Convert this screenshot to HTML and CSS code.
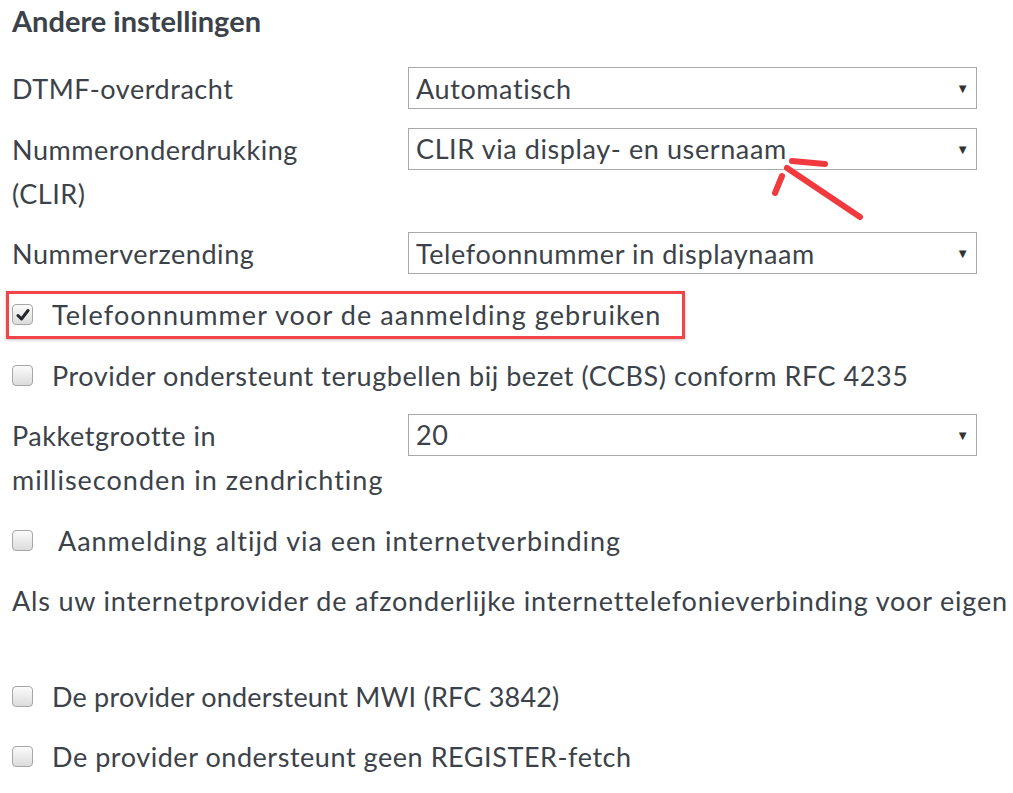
FILE: index.html
```html
<!DOCTYPE html>
<html lang="nl">
<head>
<meta charset="utf-8">
<title>Andere instellingen</title>
<link rel="stylesheet" href="styles.css">
</head>
<body>
<div class="page">
  <h2 class="title">Andere instellingen</h2>
  <div class="form">
    <div class="row">
      <label class="label">DTMF-overdracht</label>
      <div class="select"><span>Automatisch</span><span class="caret">▼</span></div>
    </div>
    <div class="row">
      <label class="label">Nummeronderdrukking<br>(CLIR)</label>
      <div class="select"><span>CLIR via display- en usernaam</span><span class="caret">▼</span></div>
    </div>
    <div class="row">
      <label class="label">Nummerverzending</label>
      <div class="select"><span>Telefoonnummer in displaynaam</span><span class="caret">▼</span></div>
    </div>
    <div class="check highlight">
      <span class="box checked"><svg viewBox="0 0 14 14" width="14" height="14"><path d="M2 7.5 L5.5 11 L12 2.5" fill="none" stroke="#23272b" stroke-width="3" stroke-linecap="round" stroke-linejoin="round"/></svg></span>
      <span class="text spaced">Telefoonnummer voor de aanmelding gebruiken</span>
    </div>
    <div class="check">
      <span class="box"></span>
      <span class="text">Provider ondersteunt terugbellen bij bezet (CCBS) conform RFC 4235</span>
    </div>
    <div class="row">
      <label class="label">Pakketgrootte in<br><span class="spaced-label">milliseconden in zendrichting</span></label>
      <div class="select"><span>20</span><span class="caret">▼</span></div>
    </div>
    <div class="check">
      <span class="box"></span>
      <span class="text wide">Aanmelding altijd via een internetverbinding</span>
    </div>
    <p class="para">Als uw internetprovider de afzonderlijke internettelefonieverbinding voor eigen</p>
    <div class="check">
      <span class="box"></span>
      <span class="text tight">De provider ondersteunt MWI (RFC 3842)</span>
    </div>
    <div class="check">
      <span class="box"></span>
      <span class="text">De provider ondersteunt geen REGISTER-fetch</span>
    </div>
  </div>
</div>
<svg class="arrow" width="120" height="90" viewBox="760 140 120 90">
  <g fill="none" stroke="#f03a3e" stroke-width="6" stroke-linecap="round">
    <path d="M792 161 L825 164"/>
    <path d="M787 168 L860 217"/>
    <path d="M782 176 L775 193"/>
  </g>
</svg>
</body>
</html>
```

FILE: styles.css
```css
html, body {
  margin: 0;
  padding: 0;
  background: #ffffff;
}
body {
  font-family: Lato, "Liberation Sans", sans-serif;
  color: #3b4249;
  font-size: 27px;
  letter-spacing: 0.55px;
  overflow: hidden;
  width: 1013px;
  height: 793px;
  position: relative;
}
.page {
  padding: 0 0 0 12px;
}
.title {
  font-size: 29px;
  font-weight: bold;
  letter-spacing: 0;
  margin: 0;
  line-height: 42px;
  color: #3b4249;
}
.form {
  display: flex;
  flex-direction: column;
  gap: 16.5px;
  margin-top: 25px;
}
.row {
  display: grid;
  grid-template-columns: 396px 569px;
  align-items: start;
}
.label {
  line-height: 44px;
}
.spaced-label {
  letter-spacing: 1px;
}
.select {
  height: 40px;
  border: 1px solid #a9a9a9;
  display: flex;
  align-items: center;
  justify-content: space-between;
  padding: 0 7px 0 7px;
  box-sizing: content-box;
  width: 553px;
  letter-spacing: 0.6px;
}
.caret {
  font-size: 13px;
  color: #333;
  letter-spacing: 0;
}
.check {
  display: flex;
  align-items: center;
  height: 44px;
  white-space: nowrap;
}
.box {
  width: 19px;
  height: 19px;
  border: 1px solid #a6a6a6;
  border-radius: 4px;
  background: linear-gradient(#fbfbfb, #dcdcdc);
  margin-right: 19px;
  display: flex;
  align-items: center;
  justify-content: center;
  flex: none;
}
.text.spaced {
  letter-spacing: 1.1px;
}
.text.wide {
  margin-left: 6px;
  letter-spacing: 0.95px;
}
.text.tight {
  letter-spacing: 0.2px;
}
.highlight {
  position: relative;
}
.highlight::after {
  content: "";
  position: absolute;
  left: -6px;
  top: -2px;
  width: 673px;
  height: 42px;
  border: 3px solid #f24449;
  box-shadow: 0 1px 3px rgba(0,0,0,0.25);
}
.para {
  margin: 0 0 35px 0;
  line-height: 44px;
  white-space: nowrap;
  letter-spacing: 0.8px;
}
.arrow {
  position: absolute;
  left: 760px;
  top: 140px;
}
```
